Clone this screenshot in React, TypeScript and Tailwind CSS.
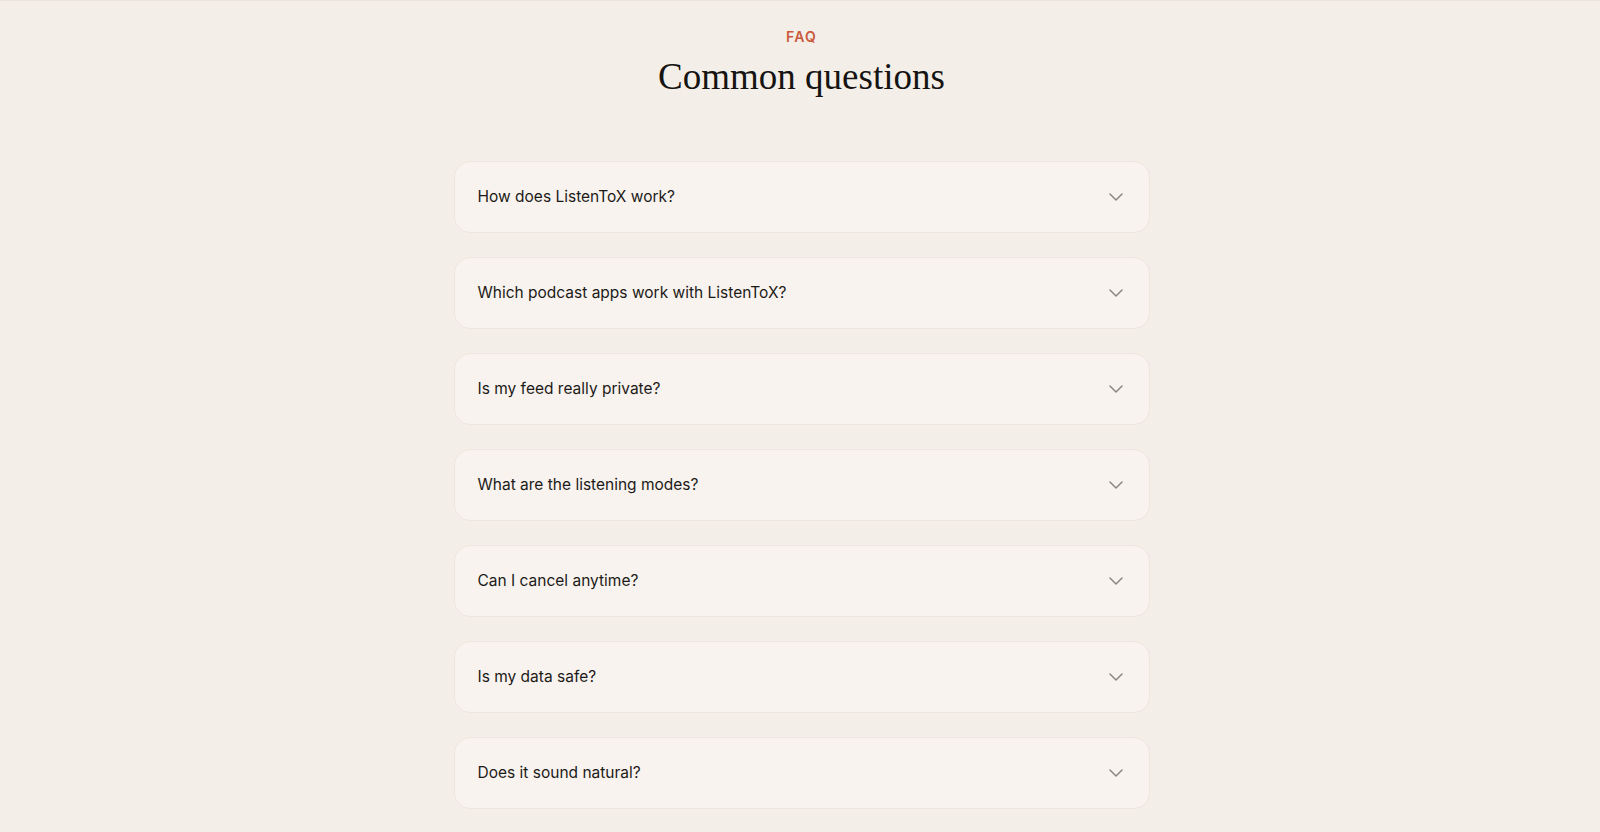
import { ChevronDown } from 'lucide-react';

const questions = [
  'How does ListenToX work?',
  'Which podcast apps work with ListenToX?',
  'Is my feed really private?',
  'What are the listening modes?',
  'Can I cancel anytime?',
  'Is my data safe?',
  'Does it sound natural?',
];

function FaqItem({ question }: { question: string }) {
  return (
    <button
      type="button"
      className="w-full flex items-center justify-between rounded-2xl border border-[#ede6de] bg-[#f8f3ee] pl-[23px] pr-[21px] py-[23px] text-left"
    >
      <span className="text-[15.5px] leading-6 text-[#1c1a18] font-['Inter',sans-serif]">{question}</span>
      <ChevronDown className="w-6 h-6 text-[#8c8782]" strokeWidth={1.5} />
    </button>
  );
}

export default function App() {
  return (
    <div className="min-h-screen bg-[#f4eee8] border-t border-[#e9e3dc]">
      <section className="pt-[26px] pb-20 pl-[19px] pr-4">
        <div className="text-center">
          <p className="text-sm leading-5 font-semibold tracking-[0.08em] uppercase text-[#c95a3b] font-['Inter',sans-serif]">
            FAQ
          </p>
          <h2 className="mt-[8px] text-[37px] leading-[1.2] text-[#161412] font-['Liberation_Serif',serif]">
            Common questions
          </h2>
        </div>

        <div className="w-[696px] mx-auto mt-[62px] flex flex-col gap-6">
          {questions.map((q) => (
            <FaqItem key={q} question={q} />
          ))}
        </div>
      </section>
    </div>
  );
}
